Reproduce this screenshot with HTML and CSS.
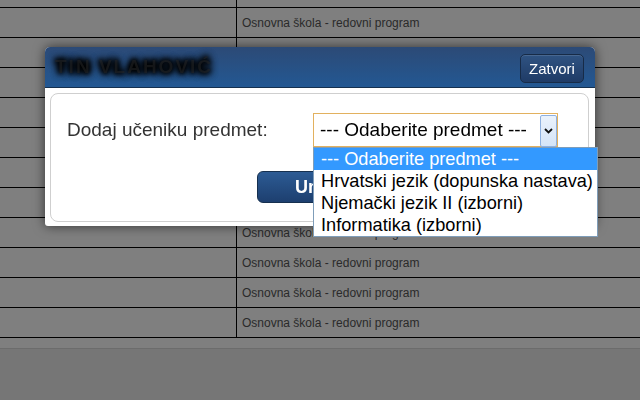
FILE: index.html
```html
<!DOCTYPE html>
<html lang="hr">
<head>
    <meta charset="UTF-8">
    <title>Predmeti učenika</title>
    <link rel="stylesheet" href="styles.css">
</head>
<body>
    <div class="page">
        <table class="list">
            <tr><td class="name"></td><td></td></tr>
            <tr><td class="name"></td><td>Osnovna škola - redovni program</td></tr>
            <tr><td class="name"></td><td>Osnovna škola - redovni program</td></tr>
            <tr><td class="name"></td><td>Osnovna škola - redovni program</td></tr>
            <tr><td class="name"></td><td>Osnovna škola - redovni program</td></tr>
            <tr><td class="name"></td><td>Osnovna škola - redovni program</td></tr>
            <tr><td class="name"></td><td>Osnovna škola - redovni program</td></tr>
            <tr><td class="name"></td><td>Osnovna škola - redovni program</td></tr>
            <tr><td class="name"></td><td>Osnovna škola - redovni program</td></tr>
            <tr><td class="name"></td><td>Osnovna škola - redovni program</td></tr>
            <tr><td class="name"></td><td>Osnovna škola - redovni program</td></tr>
            <tr><td class="name"></td><td>Osnovna škola - redovni program</td></tr>
        </table>
        <div class="footer"></div>
    </div>

    <div class="overlay"></div>

    <div class="dialog">
        <div class="dialog-header">
            <span class="dialog-title">TIN VLAHOVIĆ</span>
            <button class="btn-close">Zatvori</button>
        </div>
        <div class="dialog-body">
            <div class="panel">
                <div class="form-row">
                    <label class="form-label">Dodaj učeniku predmet:</label>
                    <div class="select">
                        <span class="select-value">--- Odaberite predmet ---</span>
                        <span class="select-arrow">
                            <svg width="9" height="6" viewBox="0 0 9 6"><path d="M1 1 L4.5 4.5 L8 1" fill="none" stroke="#111" stroke-width="1.8"/></svg>
                        </span>
                        <ul class="select-list">
                            <li class="selected">--- Odaberite predmet ---</li>
                            <li>Hrvatski jezik (dopunska nastava)</li>
                            <li>Njemački jezik II (izborni)</li>
                            <li>Informatika (izborni)</li>
                        </ul>
                    </div>
                </div>
                <div class="form-actions">
                    <button class="btn-save">Unesi</button>
                </div>
            </div>
        </div>
    </div>
</body>
</html>
```

FILE: styles.css
```css
html, body {
    margin: 0;
    height: 100%;
    overflow: hidden;
}
body {
    font-family: "Liberation Sans", Arial, sans-serif;
    background-color: white;
}
.list {
    width: 100%;
    border-collapse: collapse;
    margin-top: -22px;
}
.list td {
    height: 29px;
    padding: 0 5px;
    border-bottom: 1px solid #000;
    font-size: 12px;
    color: #555;
}
.list td.name {
    width: 226px;
    border-right: 1px solid #000;
}
.footer {
    margin-top: 10px;
    height: 60px;
    background-color: #ececec;
    border-top: 1px solid #d8d8d8;
}
.overlay {
    position: fixed;
    top: 0;
    left: 0;
    right: 0;
    bottom: 0;
    background-color: rgba(0, 0, 0, 0.5);
}
.dialog {
    position: absolute;
    left: 45px;
    top: 47px;
    width: 550px;
    background-color: white;
    border-radius: 5px 5px 3px 3px;
    box-shadow: 0 0 12px rgba(0, 0, 0, 0.6);
}
.dialog-header {
    display: flex;
    align-items: center;
    justify-content: space-between;
    height: 40px;
    padding: 0 11px 0 10px;
    background: linear-gradient(#2c4a76, #235893);
    border-bottom: 1px solid #15304f;
    border-radius: 5px 5px 0 0;
}
.dialog-title {
    font-size: 19px;
    font-weight: bold;
    color: rgba(40, 40, 40, 0.5);
    text-shadow: 0 0 4px #000, 0 0 6px #000, 0 0 7px #000, 0 0 8px #000, 0 0 9px #000;
    letter-spacing: 2px;
}
.btn-close {
    height: 29px;
    width: 64px;
    padding: 0;
    font-family: inherit;
    font-size: 15px;
    color: white;
    background: linear-gradient(#2f5382, #1f3b66);
    border: 1px solid #172b47;
    border-radius: 5px;
    box-shadow: inset 0 1px 0 rgba(255, 255, 255, 0.12);
    margin-top: 2px;
}
.dialog-body {
    padding: 5px 6px 4px 5px;
}
.panel {
    border: 1px solid #cfcfcf;
    border-radius: 8px;
    padding: 19px 16px 18px;
}
.form-row {
    display: flex;
    align-items: center;
}
.form-label {
    width: 246px;
    font-size: 19px;
    color: #333;
}
.select {
    position: relative;
    width: 243px;
    height: 32px;
    border: 1px solid #e2b15f;
    display: flex;
    align-items: center;
}
.select-value {
    padding-left: 6px;
    font-size: 19px;
    color: #000;
}
.select-arrow {
    position: absolute;
    top: 1px;
    right: 0;
    bottom: -1px;
    width: 15px;
    display: flex;
    align-items: center;
    justify-content: center;
    background: linear-gradient(#eaf2fc, #d5e4f7);
    border: 1px solid #8fb1e0;
    border-radius: 2px;
}
.select-list {
    position: absolute;
    top: 33px;
    left: -1px;
    width: 283px;
    margin: 0;
    padding: 0;
    list-style: none;
    background-color: white;
    border: 1px solid #7f9db9;
}
.select-list li {
    height: 22px;
    line-height: 22px;
    padding-left: 7px;
    font-size: 18.2px;
    color: #000;
    white-space: nowrap;
}
.select-list li.selected {
    background-color: #3399ff;
    color: white;
}
.form-actions {
    display: flex;
    justify-content: center;
    margin-top: 24px;
}
.btn-save {
    width: 126px;
    height: 32px;
    padding: 0;
    font-family: inherit;
    font-size: 18px;
    font-weight: bold;
    color: white;
    background: linear-gradient(#2c5b94, #1d3f6f);
    border: 1px solid #16304f;
    border-radius: 6px;
}
```
